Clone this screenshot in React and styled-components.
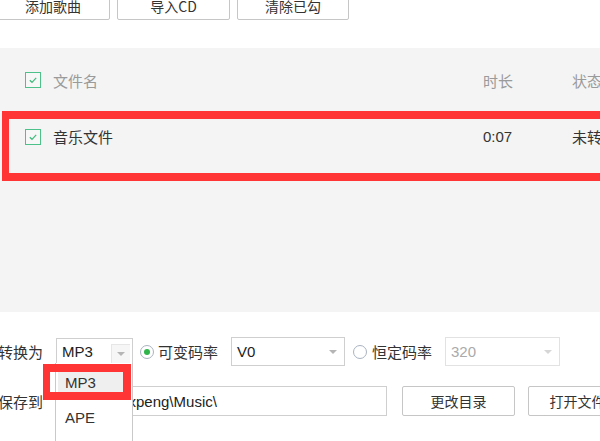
import React from 'react'
import styled, { createGlobalStyle } from 'styled-components'

const GlobalStyle = createGlobalStyle`
  html, body {
    margin: 0;
    padding: 0;
    background: #fff;
  }
  body {
    font-family: "Noto Sans CJK SC", "Microsoft YaHei", "Liberation Sans", sans-serif;
    color: #333;
    overflow: hidden;
  }
  * { box-sizing: border-box; }
`

const Page = styled.div`
  position: relative;
  width: 600px;
  height: 441px;
  overflow: hidden;
  background: #fff;
`

const Top = styled.div`
  height: 48px;
  overflow: hidden;
`

const Toolbar = styled.div`
  display: flex;
  gap: 7px;
  margin: -9px 0 0 -4px;
`

const Button = styled.div`
  flex: none;
  width: ${p => p.w || 113}px;
  height: ${p => p.h || 29}px;
  margin-left: ${p => p.ml || 0}px;
  border: 1px solid #c6c6c6;
  border-radius: 2px;
  background: #fff;
  display: flex;
  align-items: center;
  justify-content: center;
  font-size: 14px;
  color: #333;
  white-space: nowrap;
`

const Panel = styled.div`
  height: 264px;
  background: #f4f4f4;
`

const Row = styled.div`
  display: grid;
  grid-template-columns: 28px 430px 89px 1fr;
  align-items: center;
  height: ${p => p.h}px;
  padding-left: 25px;
  font-size: 15px;
  color: ${p => (p.head ? '#9a9a9a' : '#333')};
  border-top: ${p => (p.head ? 'none' : '1px solid #f9f9f9')};
  white-space: nowrap;
`

const Box = styled.span`
  width: 16px;
  height: 16px;
  border: 1px solid #4cc28a;
  background: #f7f7f7;
  display: flex;
  align-items: center;
  justify-content: center;
`

const Check = () => (
  <Box>
    <svg width="12" height="12" viewBox="0 0 12 12">
      <path d="M2.8 6.2 L5 8.3 L9.2 3.8" fill="none" stroke="#3dbb7c" strokeWidth="1.2" />
    </svg>
  </Box>
)

const Num = styled.span`
  font-family: "Liberation Sans", "Noto Sans CJK SC", sans-serif;
`

const Bottom = styled.div`
  display: flex;
  flex-direction: column;
  gap: 20px;
  padding-top: 25px;
`

const Line = styled.div`
  display: flex;
  align-items: center;
  height: ${p => p.h}px;
  font-size: 15px;
`

const Label = styled.span`
  flex: none;
  width: 58px;
  margin-left: -2px;
  color: #333;
  white-space: nowrap;
`

const Select = styled.div`
  flex: none;
  position: relative;
  width: ${p => p.w}px;
  height: ${p => p.h || 29}px;
  margin-left: ${p => p.ml || 0}px;
  border: 1px solid ${p => (p.disabled ? '#e2e2e2' : '#cfcfcf')};
  background: #fff;
  display: flex;
  align-items: center;
  padding-left: 5px;
  font-family: "Liberation Sans", "Noto Sans CJK SC", sans-serif;
  font-size: 15px;
  color: ${p => (p.disabled ? '#aaa' : '#222')};
`

const Arrow = styled.span`
  position: absolute;
  right: 2px;
  top: ${p => (p.boxed ? 5 : 2)}px;
  bottom: 1px;
  width: 19px;
  background: ${p => (p.boxed ? '#f6f6f6' : 'transparent')};
  border-left: ${p => (p.boxed ? '1px solid #e6e6e6' : 'none')};
  border-top: ${p => (p.boxed ? '1px solid #e6e6e6' : 'none')};
  display: flex;
  align-items: center;
  justify-content: center;
  &::after {
    content: '';
    border-left: 4px solid transparent;
    border-right: 4px solid transparent;
    border-top: 4px solid ${p => (p.dim ? '#d6d6d6' : '#b5b5b5')};
  }
`

const Radio = styled.span`
  flex: none;
  width: 14px;
  height: 14px;
  margin-left: ${p => p.ml}px;
  border-radius: 50%;
  border: 1px solid #a9b3bf;
  background: #fff;
  display: flex;
  align-items: center;
  justify-content: center;
  &::after {
    content: '';
    width: 6px;
    height: 6px;
    border-radius: 50%;
    background: ${p => (p.on ? '#2fb54a' : 'transparent')};
  }
`

const RadioText = styled.span`
  flex: none;
  width: ${p => p.w}px;
  margin-left: ${p => p.gap || 4}px;
  color: #333;
  white-space: nowrap;
`

const PathInput = styled.div`
  flex: none;
  width: 331px;
  height: 30px;
  border: 1px solid #cfcfcf;
  display: flex;
  align-items: center;
  padding-left: 9px;
  font-family: "Liberation Sans", sans-serif;
  font-size: 15px;
  color: #222;
  white-space: nowrap;
  overflow: hidden;
`

const Menu = styled.div`
  position: absolute;
  left: 55px;
  top: 363px;
  width: 78px;
  height: 90px;
  border: 1px solid #c9c9c9;
  border-top: none;
  background: #fff;
  padding: 7px 2px 0;
  font-family: "Liberation Sans", sans-serif;
  font-size: 15px;
  color: #333;
`

const Item = styled.div`
  height: ${p => (p.active ? 25 : 28)}px;
  padding-left: 7px;
  display: flex;
  align-items: center;
  background: ${p => (p.active ? '#efefef' : 'transparent')};
  margin-bottom: ${p => (p.active ? 8 : 5)}px;
`

const Mark = styled.div`
  position: absolute;
  left: ${p => p.x}px;
  top: ${p => p.y}px;
  width: ${p => p.w}px;
  height: ${p => p.h}px;
  border: 8px solid #ff3434;
  border-left-width: 7px;
  pointer-events: none;
`

export default function App() {
  return (
    <Page>
      <GlobalStyle />
      <Top>
        <Toolbar>
          <Button w={114}>添加歌曲</Button>
          <Button w={113}>导入CD</Button>
          <Button w={112}>清除已勾</Button>
        </Toolbar>
      </Top>
      <Panel>
        <Row head h={64}>
          <Check />
          <span>文件名</span>
          <span>时长</span>
          <span>状态</span>
        </Row>
        <Row h={48}>
          <Check />
          <span>音乐文件</span>
          <Num>0:07</Num>
          <span>未转换</span>
        </Row>
      </Panel>
      <Bottom>
        <Line h={29}>
          <Label>转换为</Label>
          <Select w={77} h={27}>
            MP3
            <Arrow boxed />
          </Select>
          <Radio on ml={7} />
          <RadioText w={62}>可变码率</RadioText>
          <Select w={114} ml={11}>
            V0
            <Arrow />
          </Select>
          <Radio ml={8} />
          <RadioText w={62} gap={5}>恒定码率</RadioText>
          <Select w={115} ml={11} disabled>
            320
            <Arrow dim />
          </Select>
        </Line>
        <Line h={30}>
          <Label>保存到</Label>
          <PathInput>C:\Users\xpeng\Music\</PathInput>
          <Button w={113} h={30} ml={15}>更改目录</Button>
          <Button w={113} h={30} ml={13}>打开文件夹</Button>
        </Line>
      </Bottom>
      <Menu>
        <Item active>MP3</Item>
        <Item>APE</Item>
        <Item>FLAC</Item>
      </Menu>
      <Mark x={2} y={111} w={620} h={70} />
      <Mark x={43} y={364} w={88} h={36} />
    </Page>
  )
}
